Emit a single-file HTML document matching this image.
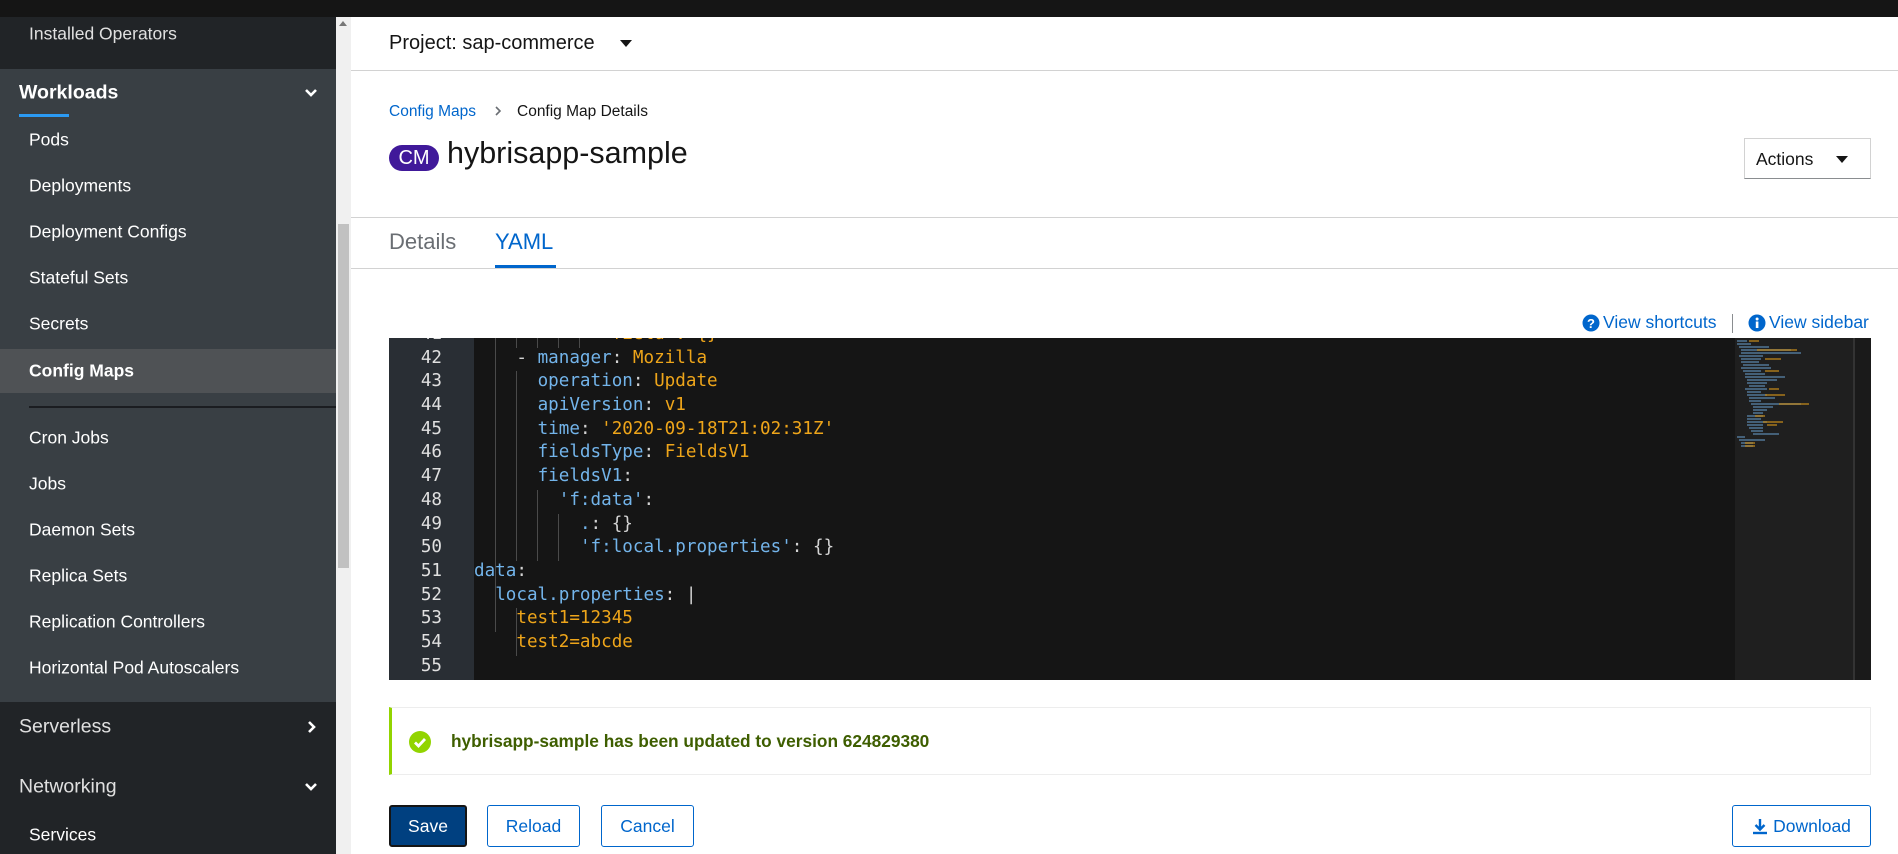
<!DOCTYPE html>
<html><head><meta charset="utf-8"><style>
*{box-sizing:border-box;margin:0;padding:0}
body{width:1898px;height:854px;overflow:hidden;background:#fff;font-family:"Liberation Sans",sans-serif;position:relative}
.a{position:absolute;white-space:nowrap}
.sb{position:absolute;left:0;top:17px;width:336px;height:837px;background:#212427}
.wl{position:absolute;left:0;top:69px;width:336px;height:633px;background:#393f44}
.ni{position:absolute;left:29px;color:#fff;font-size:17.5px;transform:translateY(-50%)}
.nh{position:absolute;left:19px;color:#fff;font-size:19.5px;transform:translateY(-50%)}
.code{font-family:"DejaVu Sans Mono",monospace;font-size:17.6px}
.ln{position:absolute;width:53px;text-align:right;left:389px;color:#e0e0e0}
.cl{position:absolute;left:474px;color:#d4d4d4;white-space:pre}
.k{color:#73b4ea}.v{color:#eea51a}
.g{position:absolute;width:1px;background:#4a4a4a}
.btn{position:absolute;top:805px;height:42px;border:1px solid #0066cc;border-radius:3px;color:#0066cc;font-size:17.5px;display:flex;align-items:center;justify-content:center}
</style></head><body>
<div class="a" style="left:0;top:0;width:1898px;height:17px;background:#151515"></div>
<div class="sb"></div>
<div class="wl"></div>
<div class="ni" style="top:34px;color:#e0e0e0">Installed Operators</div>
<div class="nh" style="top:93px;font-weight:bold">Workloads</div>
<svg class="a" style="left:304px;top:86px" width="14" height="14" viewBox="0 0 14 14"><path d="M2 4l5 5 5-5" stroke="#fff" stroke-width="2.6" fill="none"/></svg>
<div class="a" style="left:19px;top:114px;width:50px;height:3px;background:#2b9af3"></div>
<div class="ni" style="top:140px">Pods</div>
<div class="ni" style="top:186px">Deployments</div>
<div class="ni" style="top:232px">Deployment Configs</div>
<div class="ni" style="top:278px">Stateful Sets</div>
<div class="ni" style="top:324px">Secrets</div>
<div class="a" style="left:0;top:349px;width:336px;height:44px;background:#4f5255"></div>
<div class="ni" style="top:371px;font-weight:bold">Config Maps</div>
<div class="a" style="left:29px;top:406px;width:307px;height:2px;background:#1b1d21"></div>
<div class="ni" style="top:438px">Cron Jobs</div>
<div class="ni" style="top:484px">Jobs</div>
<div class="ni" style="top:530px">Daemon Sets</div>
<div class="ni" style="top:576px">Replica Sets</div>
<div class="ni" style="top:622px">Replication Controllers</div>
<div class="ni" style="top:668px">Horizontal Pod Autoscalers</div>
<div class="nh" style="top:727px;color:#e0e0e0">Serverless</div>
<svg class="a" style="left:305px;top:720px" width="14" height="14" viewBox="0 0 14 14"><path d="M4 2l5 5-5 5" stroke="#fff" stroke-width="2.6" fill="none"/></svg>
<div class="nh" style="top:787px;color:#e0e0e0">Networking</div>
<svg class="a" style="left:304px;top:780px" width="14" height="14" viewBox="0 0 14 14"><path d="M2 4l5 5 5-5" stroke="#fff" stroke-width="2.6" fill="none"/></svg>
<div class="ni" style="top:835px">Services</div>
<div class="a" style="left:336px;top:17px;width:15px;height:837px;background:#f0f0f0"></div>
<div class="a" style="left:338px;top:224px;width:11px;height:344px;background:#c1c1c1"></div>
<div class="a" style="left:339px;top:21px;width:0;height:0;border-left:4px solid transparent;border-right:4px solid transparent;border-bottom:5px solid #777"></div>

<div class="a" style="left:389px;top:32px;font-size:20px;color:#151515">Project: sap-commerce</div>
<div class="a" style="left:620px;top:40px;width:0;height:0;border-left:6px solid transparent;border-right:6px solid transparent;border-top:7px solid #151515"></div>
<div class="a" style="left:351px;top:70px;width:1547px;height:1px;background:#d2d2d2"></div>
<div class="a" style="left:389px;top:103px;font-size:15.5px;color:#0066cc">Config Maps</div>
<svg class="a" style="left:493px;top:105px" width="10" height="12" viewBox="0 0 10 12"><path d="M3 2l4 4-4 4" stroke="#6a6e73" stroke-width="1.6" fill="none"/></svg>
<div class="a" style="left:517px;top:103px;font-size:15.5px;color:#151515">Config Map Details</div>
<div class="a" style="left:389px;top:145px;width:50px;height:26px;border-radius:13px;background:#40199a;color:#fff;font-size:20px;text-align:center;line-height:26px">CM</div>
<div class="a" style="left:447px;top:136px;font-size:30.5px;color:#151515">hybrisapp-sample</div>
<div class="a" style="left:1744px;top:138px;width:127px;height:41px;border:1px solid #d2d2d2;border-bottom-color:#8a8d90;font-size:17.5px;color:#151515;padding:10px 0 0 11px">Actions</div>
<div class="a" style="left:1836px;top:156px;width:0;height:0;border-left:6px solid transparent;border-right:6px solid transparent;border-top:7px solid #151515"></div>
<div class="a" style="left:351px;top:217px;width:1547px;height:1px;background:#d2d2d2"></div>
<div class="a" style="left:389px;top:229px;font-size:22px;color:#6a6e73">Details</div>
<div class="a" style="left:495px;top:229px;font-size:22px;color:#0066cc">YAML</div>
<div class="a" style="left:351px;top:268px;width:1547px;height:1px;background:#d2d2d2"></div>
<div class="a" style="left:495px;top:265px;width:61px;height:3px;background:#0066cc"></div>

<svg class="a" style="left:1582px;top:314px" width="18" height="18" viewBox="0 0 18 18"><circle cx="9" cy="9" r="8.5" fill="#0066cc"/><text x="9" y="14" text-anchor="middle" fill="#fff" font-size="13" font-weight="bold" font-family="Liberation Sans">?</text></svg>
<div class="a" style="left:1603px;top:312px;font-size:17.5px;color:#0066cc">View shortcuts</div>
<div class="a" style="left:1732px;top:314px;width:1px;height:19px;background:#8a8d90"></div>
<svg class="a" style="left:1748px;top:314px" width="18" height="18" viewBox="0 0 18 18"><circle cx="9" cy="9" r="8.5" fill="#0066cc"/><rect x="7.8" y="7.5" width="2.6" height="6.5" fill="#fff"/><circle cx="9.1" cy="5" r="1.5" fill="#fff"/></svg>
<div class="a" style="left:1769px;top:312px;font-size:17.5px;color:#0066cc">View sidebar</div>

<div class="a" style="left:389px;top:338px;width:1482px;height:342px;background:#151515;overflow:hidden"></div>
<div class="a" style="left:389px;top:338px;width:85px;height:342px;background:#292e34"></div>
<div class="a" style="left:1735px;top:338px;width:118px;height:342px;background:#1f1f1f"></div>
<div class="a" style="left:1853px;top:338px;width:2px;height:342px;background:#333"></div>
<div class="a" style="left:1855px;top:338px;width:16px;height:342px;background:#1a1a1a"></div>
<svg class="a" style="left:1735px;top:338px" width="118" height="120"><g stroke-width="1.3">
<path d="M2 3h10M2 6h14M4 9h30M6 12h50M6 15h60M4 18h24M6 21h20M6 24h18M8 27h26M6 30h30M8 33h18M10 36h20M10 39h40M12 42h30M12 45h20M14 48h16M10 51h22M12 54h14M12 57h20M14 60h26M14 63h12M16 66h50M18 69h20M18 72h14M18 75h10M12 78h16M12 81h14M12 84h20M12 87h16M14 90h14M16 93h12M18 96h26M2 99h8M4 102h26M6 105h12M6 108h12" stroke="#73b4ea" opacity=".7"/>
<path d="M14 3h10M22 12h40M30 21h16M30 33h14M34 51h10M30 57h20M44 66h30M20 78h10M28 84h20M32 87h10M10 105h10M10 108h10" stroke="#eea51a" opacity=".8"/></g></svg>
<div class="code">
<div class="a" style="left:389px;top:338px;width:1346px;height:342px;overflow:hidden">
<div class="ln" style="left:0;top:-14px">41</div>
<div class="cl" style="left:85px;top:-14px;color:#eea51a">            'field': {}</div>
<div class="ln" style="left:0;top:10px">42</div><div class="cl" style="left:85px;top:10px">    - <span class="k">manager</span>: <span class="v">Mozilla</span></div>
<div class="ln" style="left:0;top:33px">43</div><div class="cl" style="left:85px;top:33px">      <span class="k">operation</span>: <span class="v">Update</span></div>
<div class="ln" style="left:0;top:57px">44</div><div class="cl" style="left:85px;top:57px">      <span class="k">apiVersion</span>: <span class="v">v1</span></div>
<div class="ln" style="left:0;top:81px">45</div><div class="cl" style="left:85px;top:81px">      <span class="k">time</span>: <span class="v">'2020-09-18T21:02:31Z'</span></div>
<div class="ln" style="left:0;top:104px">46</div><div class="cl" style="left:85px;top:104px">      <span class="k">fieldsType</span>: <span class="v">FieldsV1</span></div>
<div class="ln" style="left:0;top:128px">47</div><div class="cl" style="left:85px;top:128px">      <span class="k">fieldsV1</span>:</div>
<div class="ln" style="left:0;top:152px">48</div><div class="cl" style="left:85px;top:152px">        <span class="k">'f:data'</span>:</div>
<div class="ln" style="left:0;top:176px">49</div><div class="cl" style="left:85px;top:176px">          <span class="k">.</span>: {}</div>
<div class="ln" style="left:0;top:199px">50</div><div class="cl" style="left:85px;top:199px">          <span class="k">'f:local.properties'</span>: {}</div>
<div class="ln" style="left:0;top:223px">51</div><div class="cl" style="left:85px;top:223px"><span class="k">data</span>:</div>
<div class="ln" style="left:0;top:247px">52</div><div class="cl" style="left:85px;top:247px">  <span class="k">local.properties</span>: |</div>
<div class="ln" style="left:0;top:270px">53</div><div class="cl" style="left:85px;top:270px">    <span class="v">test1=12345</span></div>
<div class="ln" style="left:0;top:294px">54</div><div class="cl" style="left:85px;top:294px">    <span class="v">test2=abcde</span></div>
<div class="ln" style="left:0;top:318px">55</div>
<div class="g" style="left:106px;top:0;height:294px"></div>
<div class="g" style="left:127px;top:0;height:10px"></div>
<div class="g" style="left:127px;top:33px;height:190px"></div>
<div class="g" style="left:148px;top:0;height:10px"></div>
<div class="g" style="left:148px;top:152px;height:71px"></div>
<div class="g" style="left:169px;top:0;height:10px"></div>
<div class="g" style="left:169px;top:176px;height:47px"></div>
<div class="g" style="left:190px;top:0;height:10px"></div>
<div class="g" style="left:127px;top:270px;height:48px"></div>
</div>
</div>

<div class="a" style="left:389px;top:707px;width:1482px;height:68px;border:1px solid #ededed;border-left:3px solid #92d400"></div>
<svg class="a" style="left:409px;top:731px" width="22" height="22" viewBox="0 0 22 22"><circle cx="11" cy="11" r="11" fill="#92d400"/><path d="M6 11.5l3.5 3.5 6.5-7" stroke="#fff" stroke-width="2.8" fill="none"/></svg>
<div class="a" style="left:451px;top:731px;font-size:17.3px;font-weight:bold;color:#3e5e00">hybrisapp-sample has been updated to version 624829380</div>

<div class="btn" style="left:389px;width:78px;background:#004080;border-color:#151515;border-width:2px;color:#fff">Save</div>
<div class="btn" style="left:487px;width:93px">Reload</div>
<div class="btn" style="left:601px;width:93px">Cancel</div>
<div class="btn" style="left:1732px;width:139px"><svg width="16" height="17" viewBox="0 0 16 17" style="margin-right:5px"><path d="M8 1v10M3.5 7l4.5 4.5L12.5 7" stroke="#0066cc" stroke-width="2.4" fill="none"/><path d="M1 15h14" stroke="#0066cc" stroke-width="2.4"/></svg>Download</div>
</body></html>
